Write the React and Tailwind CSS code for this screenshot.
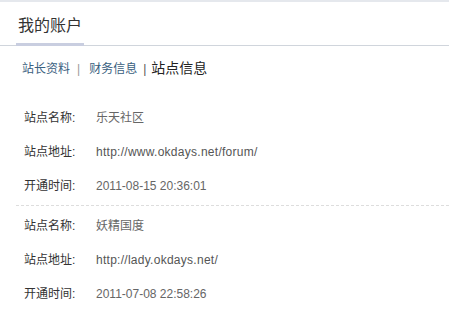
import React from 'react';

const sites = [
  { name: '乐天社区', url: 'http://www.okdays.net/forum/', time: '2011-08-15 20:36:01' },
  { name: '妖精国度', url: 'http://lady.okdays.net/', time: '2011-07-08 22:58:26' },
];

const font = { fontFamily: '"Liberation Sans", "Noto Sans CJK SC", sans-serif' };

const Row = ({ label, value, url }) => (
  <div className="flex items-center h-[34px] text-[12px]">
    <span className="w-[72px] text-[#333]">{label}</span>
    <span className={url ? 'text-[#555] tracking-[0.27px]' : 'text-[#666]'}>{value}</span>
  </div>
);

export default function App() {
  return (
    <div className="w-[449px] h-[318px] bg-white overflow-hidden" style={font}>
      <div className="h-[2px] bg-[#e5e8ed]" />

      {/* Header */}
      <div className="relative h-[44px] border-b border-[#d0d5dc]">
        <h1 className="pl-[18px] pt-[13px] text-[16px] leading-[22px] text-[#333] font-normal">我的账户</h1>
        <div className="absolute left-[16px] bottom-[-1px] w-[68px] h-[3px] bg-[#c9cee0]" />
      </div>

      {/* Tabs */}
      <div className="flex items-center pl-[22px] pt-[15px] h-[30px] text-[12px]">
        <a className="text-[#3a6080]">站长资料</a>
        <span className="ml-[7px] mr-[9px] text-[#999]">|</span>
        <a className="text-[#3a6080]">财务信息</a>
        <span className="ml-[6px] mr-[5px] text-[#555]">|</span>
        <span className="text-[14px] text-[#222]">站点信息</span>
      </div>

      <div className="pt-[25px]">
        {sites.map((s, i) => (
          <div key={s.name} className={i > 0 ? 'border-t border-dashed border-[#ddd] ml-[16px] pt-[3px]' : 'pb-[2px]'}>
            <div className={i > 0 ? 'pl-[8px]' : 'pl-[24px]'}>
              <Row label="站点名称:" value={s.name} />
              <Row label="站点地址:" value={s.url} url />
              <Row label="开通时间:" value={s.time} />
            </div>
          </div>
        ))}
      </div>
    </div>
  );
}
